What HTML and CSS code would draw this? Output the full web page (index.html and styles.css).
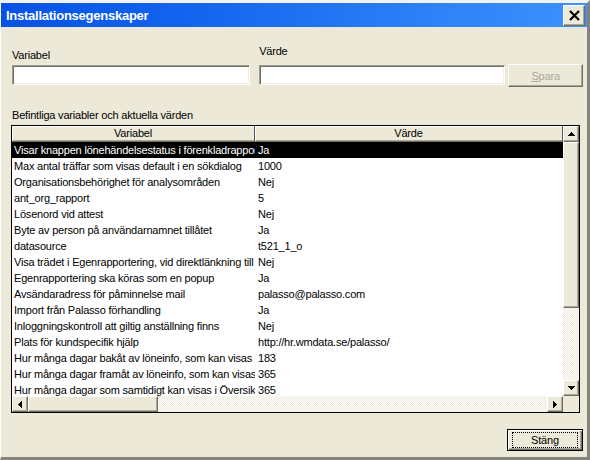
FILE: index.html
```html
<!DOCTYPE html>
<html lang="sv">
<head>
<meta charset="utf-8">
<title>Installationsegenskaper</title>
<link rel="stylesheet" href="styles.css">
</head>
<body>
<div class="window">
  <div class="titlebar">
    <span class="title">Installationsegenskaper</span>
    <div class="close">
      <svg width="11" height="11" viewBox="0 0 11 11"><path d="M1 1L10 10M10 1L1 10" stroke="#000" stroke-width="2.2" fill="none"/></svg>
    </div>
  </div>
  <div class="client">
    <div class="form">
      <div class="field f1"><label class="lbl l1">Variabel</label><input class="input" type="text"></div>
      <div class="field f2"><label class="lbl l2">Värde</label><input class="input" type="text"></div>
      <div class="btn spara"><u>S</u>para</div>
    </div>
    <div class="caption">Befintliga variabler och aktuella värden</div>
    <div class="list">
      <div class="listmain">
        <div class="header"><div class="hcell">Variabel</div><div class="hcell">Värde</div></div>
        <div class="rows">
          <div class="row sel"><div class="cell">Visar knappen lönehändelsestatus i förenkladrapportering</div><div class="cell">Ja</div></div>
          <div class="row"><div class="cell">Max antal träffar som visas default i en sökdialog</div><div class="cell">1000</div></div>
          <div class="row"><div class="cell">Organisationsbehörighet för analysområden</div><div class="cell">Nej</div></div>
          <div class="row"><div class="cell">ant_org_rapport</div><div class="cell">5</div></div>
          <div class="row"><div class="cell">Lösenord vid attest</div><div class="cell">Nej</div></div>
          <div class="row"><div class="cell">Byte av person på användarnamnet tillåtet</div><div class="cell">Ja</div></div>
          <div class="row"><div class="cell">datasource</div><div class="cell">t521_1_o</div></div>
          <div class="row"><div class="cell">Visa trädet i Egenrapportering, vid direktlänkning till Egenrapportering</div><div class="cell">Nej</div></div>
          <div class="row"><div class="cell">Egenrapportering ska köras som en popup</div><div class="cell">Ja</div></div>
          <div class="row"><div class="cell">Avsändaradress för påminnelse mail</div><div class="cell">palasso@palasso.com</div></div>
          <div class="row"><div class="cell">Import från Palasso förhandling</div><div class="cell">Ja</div></div>
          <div class="row"><div class="cell">Inloggningskontroll att giltig anställning finns</div><div class="cell">Nej</div></div>
          <div class="row"><div class="cell">Plats för kundspecifik hjälp</div><div class="cell">http://hr.wmdata.se/palasso/</div></div>
          <div class="row"><div class="cell">Hur många dagar bakåt av löneinfo, som kan visas samtidigt</div><div class="cell">183</div></div>
          <div class="row"><div class="cell">Hur många dagar framåt av löneinfo, som kan visas samtidigt</div><div class="cell">365</div></div>
          <div class="row"><div class="cell">Hur många dagar som samtidigt kan visas i Översikt</div><div class="cell">365</div></div>
        </div>
      </div>
      <div class="vscroll">
        <div class="sbtn"><svg width="7" height="4" viewBox="0 0 7 4"><path d="M3 0h1v1h-1zM2 1h3v1h-3zM1 2h5v1h-5zM0 3h7v1h-7z" fill="#000"/></svg></div>
        <div class="thumb vthumb"></div>
        <div class="track"></div>
        <div class="sbtn"><svg width="7" height="4" viewBox="0 0 7 4"><path d="M0 0h7v1h-7zM1 1h5v1h-5zM2 2h3v1h-3zM3 3h1v1h-1z" fill="#000"/></svg></div>
      </div>
      <div class="hscroll">
        <div class="sbtn"><svg width="4" height="7" viewBox="0 0 4 7"><path d="M0 3h1v1h-1zM1 2h1v3h-1zM2 1h1v5h-1zM3 0h1v7h-1z" fill="#000"/></svg></div>
        <div class="thumb hthumb"></div>
        <div class="track"></div>
        <div class="sbtn"><svg width="4" height="7" viewBox="0 0 4 7"><path d="M0 0h1v7h-1zM1 1h1v5h-1zM2 2h1v3h-1zM3 3h1v1h-1z" fill="#000"/></svg></div>
      </div>
      <div class="corner"></div>
    </div>
    <div class="footer">
      <div class="btn stang"><span class="focus">Stän<u>g</u></span></div>
    </div>
  </div>
</div>
</body>
</html>
```
FILE: styles.css
```css
* { box-sizing: border-box; }

body {
  margin: 0;
  font-family: "Liberation Sans", Arial, sans-serif;
  font-size: 11px;
  letter-spacing: -0.2px;
  color: #000;
  background: #ece9d8;
}

.window {
  width: 590px;
  height: 460px;
  border-top: 3px solid #f4f3ee;
  border-left: 1px solid #fff;
  border-right: 3px solid #85837a;
  border-bottom: 3px solid #85837a;
  background: #ece9d8;
  display: flex;
  flex-direction: column;
}

.titlebar {
  flex: none;
  height: 24px;
  display: flex;
  align-items: center;
  padding-left: 5px;
  background: linear-gradient(90deg, #0652e6 0%, #1466ef 35%, #2c7ef7 70%, #3d92fd 100%);
}

.title {
  color: #fff;
  font-weight: bold;
  font-size: 13px;
  letter-spacing: -0.25px;
}

.close {
  margin-left: auto;
  margin-right: 2px;
  width: 22px;
  height: 21px;
  background: #ece9d8;
  border: 1px solid;
  border-color: #fff #716f64 #716f64 #fff;
  box-shadow: inset -1px -1px #aca899;
  display: flex;
  align-items: center;
  justify-content: center;
}

.close svg { display: block; }

.client {
  flex: 1;
  padding: 18px 4px 0 10px;
}

.form {
  display: flex;
  align-items: flex-end;
}

.field {
  display: flex;
  flex-direction: column;
}

.f1 { width: 239px; margin-left: 1px; }
.f2 { width: 247px; margin-left: 9px; }

.lbl { line-height: 13px; }
.l1 { margin-bottom: 3px; }
.l2 { margin-bottom: 7px; }

.input {
  display: block;
  width: 100%;
  height: 20px;
  margin: 0;
  padding: 0 2px;
  font: inherit;
  background: #fff;
  border: 1px solid;
  border-color: #9d9b8f #fff #fff #9d9b8f;
  box-shadow: inset 1px 1px #716f64, inset -1px -1px #f1efe2;
  outline: none;
}

.btn {
  background: #ece9d8;
  display: flex;
  align-items: center;
  justify-content: center;
}

.spara {
  width: 75px;
  height: 23px;
  margin-left: 3px;
  margin-bottom: -2px;
  color: #aca899;
  border: 1px solid;
  border-color: #fff #716f64 #716f64 #fff;
  box-shadow: inset -1px -1px #aca899;
}

.caption {
  margin-top: 24px;
  margin-left: 1px;
  line-height: 13px;
}

.list {
  margin-top: 3px;
  width: 569px;
  height: 288px;
  border: 1px solid #000;
  display: grid;
  grid-template-columns: 551px 16px;
  grid-template-rows: 270px 16px;
  background: #fff;
}

.listmain {
  overflow: hidden;
  display: flex;
  flex-direction: column;
}

.header {
  flex: none;
  display: grid;
  grid-template-columns: 243px 308px;
  height: 16px;
}

.hcell {
  background: #ece9d8;
  text-align: center;
  line-height: 14px;
  border-right: 1px solid #555;
  border-bottom: 1px solid #716f64;
  box-shadow: inset 1px 1px #fff, inset 0 -1px #aca899;
}

.rows {
  flex: 1;
  overflow: hidden;
}

.row {
  display: grid;
  grid-template-columns: 243px 308px;
  height: 16px;
  line-height: 16px;
}

.cell {
  overflow: hidden;
  white-space: nowrap;
  padding-left: 2px;
}

.row .cell + .cell { padding-left: 3px; }

.row.sel {
  background: #000;
  color: #fff;
}

.vscroll {
  display: flex;
  flex-direction: column;
  background: #ece9d8;
}

.hscroll {
  display: flex;
  background: #ece9d8;
}

.sbtn {
  flex: none;
  width: 16px;
  height: 16px;
  background: #ece9d8;
  border: 1px solid;
  border-color: #fff #716f64 #716f64 #fff;
  box-shadow: inset -1px -1px #aca899;
  display: flex;
  align-items: center;
  justify-content: center;
}

.sbtn svg { display: block; }

.thumb {
  flex: none;
  background: #ece9d8;
  border: 1px solid;
  border-color: #fff #716f64 #716f64 #fff;
  box-shadow: inset -1px -1px #aca899;
}

.vthumb { height: 166px; }
.hthumb { width: 130px; }

.track {
  flex: 1;
  background: repeating-conic-gradient(#fff 0 25%, #ece9d8 0 50%) 0 0 / 2px 2px;
}

.corner { background: #ece9d8; }

.footer {
  display: flex;
  justify-content: flex-end;
  margin-top: 16px;
}

.stang {
  width: 76px;
  height: 22px;
  border: 1px solid #000;
  box-shadow: inset 1px 1px #fff, inset -1px -1px #716f64, inset -2px -2px #aca899;
  padding: 2px 4px;
  align-items: stretch;
}

.focus {
  flex: 1;
  border: 1px dotted #000;
  display: flex;
  align-items: center;
  justify-content: center;
  line-height: 12px;
}
```
